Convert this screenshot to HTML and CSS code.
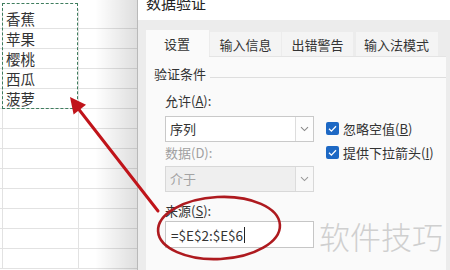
FILE: index.html
```html
<!DOCTYPE html>
<html lang="zh-CN">
<head>
<meta charset="utf-8">
<title>数据验证</title>
<link rel="stylesheet" href="styles.css">
</head>
<body>
<div class="screen">
  <div class="sheet">
    <div class="row"><div class="cell a">香蕉</div><div class="cell b"></div></div>
    <div class="row"><div class="cell a">苹果</div><div class="cell b"></div></div>
    <div class="row"><div class="cell a">樱桃</div><div class="cell b"></div></div>
    <div class="row"><div class="cell a">西瓜</div><div class="cell b"></div></div>
    <div class="row"><div class="cell a">菠萝</div><div class="cell b"></div></div>
    <div class="row"><div class="cell a"></div><div class="cell b"></div></div>
    <div class="row"><div class="cell a"></div><div class="cell b"></div></div>
    <div class="row"><div class="cell a"></div><div class="cell b"></div></div>
    <div class="row"><div class="cell a"></div><div class="cell b"></div></div>
    <div class="row"><div class="cell a"></div><div class="cell b"></div></div>
    <div class="row"><div class="cell a"></div><div class="cell b"></div></div>
    <div class="row"><div class="cell a"></div><div class="cell b"></div></div>
    <div class="row"><div class="cell a"></div><div class="cell b"></div></div>
    <div class="shade"></div>
    <div class="marquee"></div>
  </div>
  <div class="dialog">
    <div class="titlebar"><span class="title">数据验证</span></div>
    <div class="dlg-body">
      <div class="tabs">
        <div class="tab active">设置</div>
        <div class="tab">输入信息</div>
        <div class="tab">出错警告</div>
        <div class="tab">输入法模式</div>
      </div>
      <div class="panel">
        <div class="group-head"><span class="group-title">验证条件</span><span class="rule"></span></div>
        <div class="group-body">
          <div class="col-left">
            <div class="lbl">允许(<u>A</u>):</div>
            <div class="select">
              <span class="val">序列</span>
              <span class="btn"><svg width="9" height="6" viewBox="0 0 9 6"><path d="M1 1.2 L4.5 4.6 L8 1.2" fill="none" stroke="#8a8a8a" stroke-width="1.1"/></svg></span>
            </div>
            <div class="lbl lbl-data disabled">数据(D):</div>
            <div class="select disabled">
              <span class="val">介于</span>
              <span class="btn"><svg width="9" height="6" viewBox="0 0 9 6"><path d="M1 1.2 L4.5 4.6 L8 1.2" fill="none" stroke="#9a9a9a" stroke-width="1.1"/></svg></span>
            </div>
            <div class="lbl lbl-src">来源(<u>S</u>):</div>
            <div class="input"><span class="val">=$E$2:$E$6</span><span class="caret"></span></div>
          </div>
          <div class="col-right">
            <div class="chk"><span class="box"><svg width="13" height="13" viewBox="0 0 13 13"><path d="M3 6.8 L5.4 9.1 L10 4.2" fill="none" stroke="#fff" stroke-width="1.3"/></svg></span><span>忽略空值(<u>B</u>)</span></div>
            <div class="chk"><span class="box"><svg width="13" height="13" viewBox="0 0 13 13"><path d="M3 6.8 L5.4 9.1 L10 4.2" fill="none" stroke="#fff" stroke-width="1.3"/></svg></span><span>提供下拉箭头(<u>I</u>)</span></div>
          </div>
        </div>
      </div>
    </div>
  </div>
  <div class="watermark">软件技巧</div>
  <svg class="annot" width="450" height="270" viewBox="0 0 450 270">
    <line x1="158" y1="211" x2="77" y2="107" stroke="#c0141a" stroke-width="3" stroke-linecap="round"/>
    <polygon points="70,97 73.6,114.5 86,104.8" fill="#c0141a"/>
    <ellipse cx="219" cy="228" rx="61" ry="31" fill="none" stroke="#ae1a1f" stroke-width="2.6" transform="rotate(-3 219 228)"/>
  </svg>
</div>
</body>
</html>
```

FILE: styles.css
```css
* { box-sizing: border-box; }

html, body {
  margin: 0;
  padding: 0;
  width: 450px;
  height: 270px;
  overflow: hidden;
  background: #ffffff;
  font-family: "Noto Sans CJK SC", "Noto Sans", sans-serif;
  color: #333333;
}

u { text-decoration: underline; text-underline-offset: 1px; }

.screen {
  position: relative;
  display: flex;
  width: 450px;
  height: 270px;
}

/* ---------- spreadsheet ---------- */
.sheet {
  position: relative;
  width: 137px;
  flex: none;
  padding-top: 9px;
  background: #ffffff;
}

.row {
  display: flex;
  height: 20px;
  border-bottom: 1px solid #e2e2e2;
}

.cell {
  height: 19px;
  line-height: 19px;
  font-size: 14.5px;
  color: #333;
}

.cell.a {
  width: 77px;
  margin-left: 2px;
  padding-left: 3px;
  border-left: 1px solid #e2e2e2;
  border-right: 1px solid #e2e2e2;
}

.cell.b { flex: 1; }

.shade {
  position: absolute;
  top: 0;
  right: 0;
  width: 42px;
  height: 100%;
  background: linear-gradient(to right, rgba(0,0,0,0), rgba(0,0,0,0.13));
}

.marquee {
  position: absolute;
  left: 2px;
  top: 3px;
  width: 76px;
  height: 106px;
  border: 1.5px dashed #3f7d5e;
}

/* ---------- dialog ---------- */
.dialog {
  flex: 1;
  display: flex;
  flex-direction: column;
  background: #ececec;
  border-left: 1px solid #b9b9b9;
}

.titlebar {
  height: 20px;
  flex: none;
  background: #ffffff;
  overflow: hidden;
  padding-left: 8px;
}

.title {
  display: block;
  font-size: 15px;
  line-height: 20px;
  margin-top: -7px;
  color: #222;
}

.dlg-body {
  flex: 1;
  display: flex;
  flex-direction: column;
  padding: 10px 4px 0 8px;
}

.tabs {
  display: flex;
  height: 27px;
  align-items: flex-end;
  gap: 1px;
}

.tab {
  height: 25px;
  line-height: 25px;
  padding: 0 9.5px;
  font-size: 13px;
  background: #f4f4f4;
  color: #333;
}

.tab:nth-child(4) { margin-left: 2px; padding: 0 9px 0 8px; }

.tab.active {
  height: 27px;
  line-height: 28px;
  padding: 0 19px 0 18px;
  background: #fafafa;
  position: relative;
  z-index: 1;
}

.panel {
  flex: 1;
  background: #fafafa;
  border-top: 1px solid #e4e4e4;
  padding: 8px 0 0 8px;
  margin-top: -1px;
}

.group-head {
  display: flex;
  height: 18px;
  font-size: 13px;
  line-height: 18px;
}

.rule {
  flex: 1;
  height: 1px;
  margin: 12px 0 0 4px;
  background: #dedede;
}

.group-body {
  display: flex;
  margin-top: 9px;
  padding-left: 11px;
}

.col-left {
  width: 149px;
  display: flex;
  flex-direction: column;
}

.lbl {
  font-size: 13px;
  line-height: 18px;
  height: 18px;
  color: #333;
}

.lbl.disabled { color: #a0a0a0; }

.lbl-data { margin-top: 2px; }
.lbl-src { margin-top: 10px; }

.select {
  display: flex;
  height: 26px;
  margin-top: 6px;
  background: #ffffff;
  border: 1px solid #c9c9c9;
}

.select.disabled {
  margin-top: 4px;
  background: #efefef;
  border-color: #d8d8d8;
  color: #a3a3a3;
}

.select .val {
  flex: 1;
  font-size: 13px;
  line-height: 24px;
  padding-left: 4px;
}

.select .btn {
  width: 18px;
  display: flex;
  align-items: center;
  justify-content: center;
  border-left: 1px solid #dddddd;
  background: #fdfdfd;
}

.select.disabled .btn { background: #f8f8f8; border-left-color: #dcdcdc; }

.input {
  display: flex;
  align-items: center;
  height: 27px;
  margin-top: 1px;
  background: #ffffff;
  border: 1px solid #c6c6c6;
  padding-left: 5px;
  font-size: 13.5px;
  color: #333;
}

.caret {
  width: 1px;
  height: 16px;
  margin-left: 1px;
  background: #222;
}

.col-right {
  display: flex;
  flex-direction: column;
  gap: 6px;
  margin-left: 12px;
  padding-top: 27px;
}

.chk {
  display: flex;
  align-items: center;
  height: 18px;
  font-size: 13px;
  color: #333;
}

.box {
  width: 13px;
  height: 13px;
  border-radius: 2px;
  background: #1d68c4;
  display: flex;
  margin-right: 4px;
}

/* ---------- overlays ---------- */
.watermark {
  position: absolute;
  left: 319px;
  top: 219px;
  font-size: 31px;
  line-height: 34px;
  color: #cfcfcf;
  font-family: "Noto Sans CJK SC", sans-serif;
  font-weight: 300;
}

.annot {
  position: absolute;
  left: 0;
  top: 0;
  pointer-events: none;
}
```
